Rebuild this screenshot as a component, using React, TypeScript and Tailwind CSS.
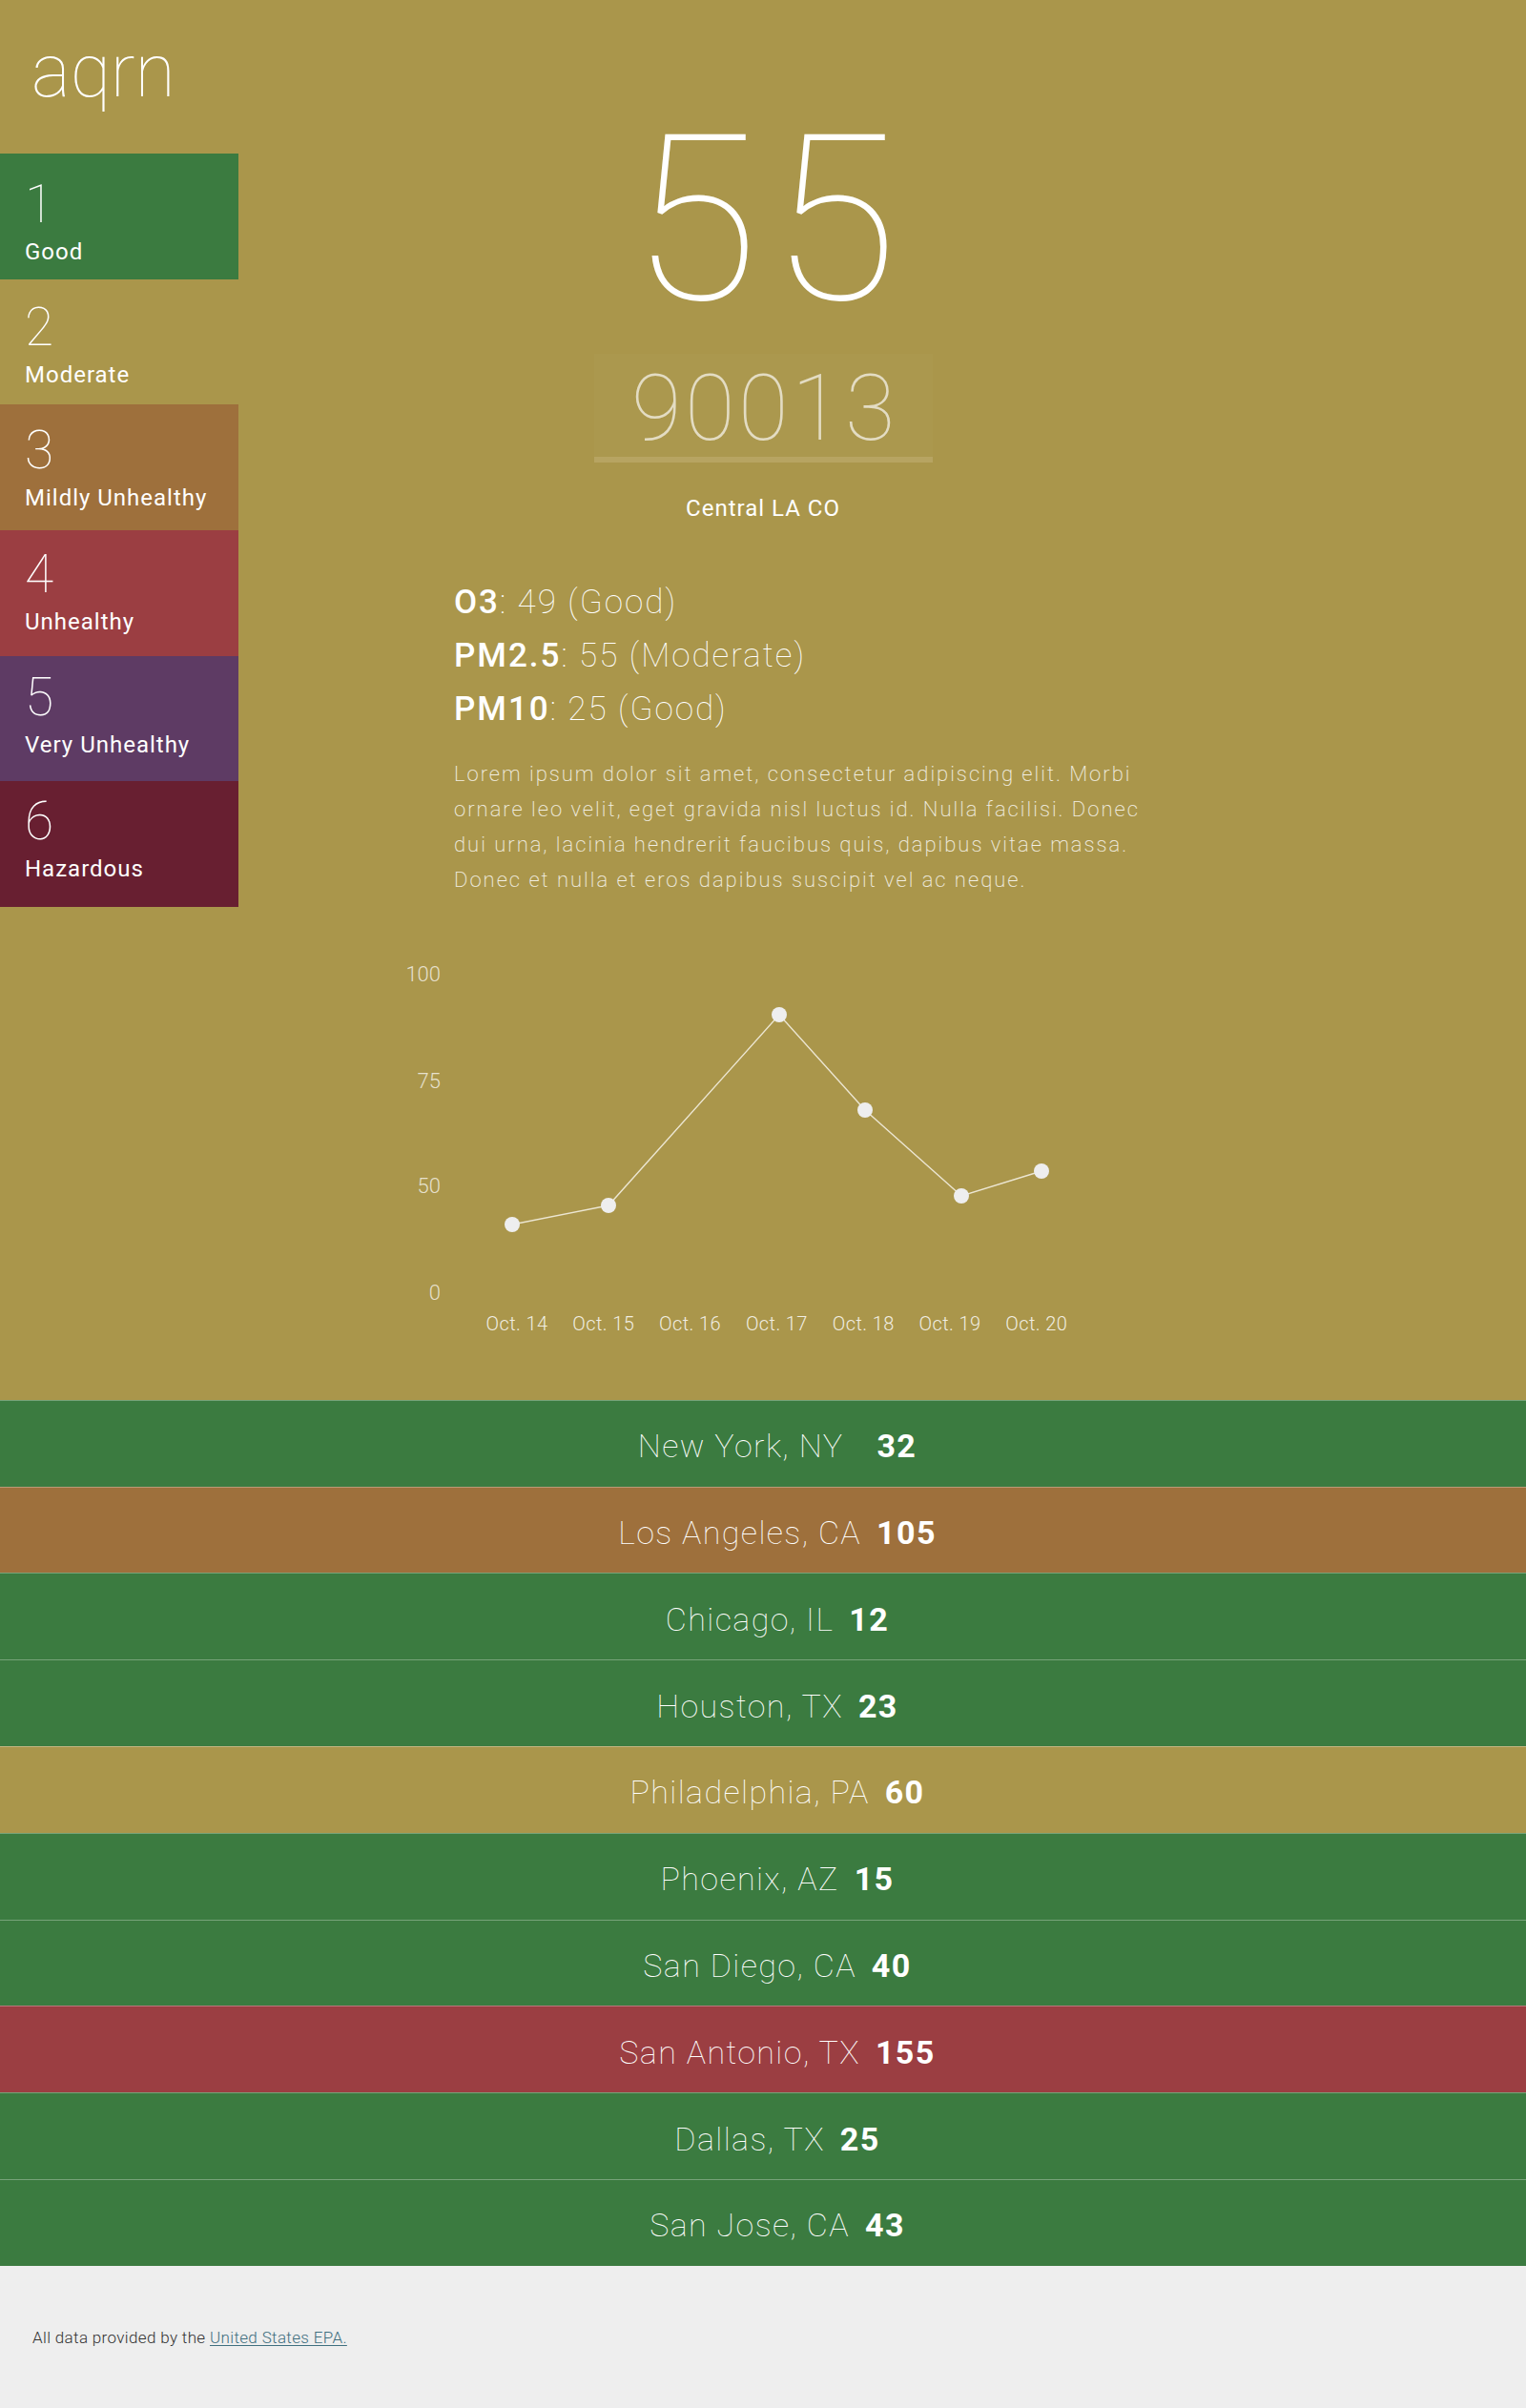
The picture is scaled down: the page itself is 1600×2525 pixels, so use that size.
import React from "react";

const LEVELS = [
  { n: 1, label: "Good", bg: "bg-[#3b7b40]", pt: "pt-[25.5px]" },
  { n: 2, label: "Moderate", bg: "bg-[#aa964b]", pt: "pt-[23.3px]" },
  { n: 3, label: "Mildly Unhealthy", bg: "bg-[#9e703c]", pt: "pt-[21.1px]" },
  { n: 4, label: "Unhealthy", bg: "bg-[#9b3e42]", pt: "pt-[18.9px]" },
  { n: 5, label: "Very Unhealthy", bg: "bg-[#5e3b64]", pt: "pt-[16.7px]" },
  { n: 6, label: "Hazardous", bg: "bg-[#681f31]", pt: "pt-[14.5px]" },
];

const CITIES = [
  { name: "New York, NY\u00a0\u00a0", aqi: 32 },
  { name: "Los Angeles, CA", aqi: 105 },
  { name: "Chicago, IL", aqi: 12 },
  { name: "Houston, TX", aqi: 23 },
  { name: "Philadelphia, PA", aqi: 60 },
  { name: "Phoenix, AZ", aqi: 15 },
  { name: "San Diego, CA", aqi: 40 },
  { name: "San Antonio, TX", aqi: 155 },
  { name: "Dallas, TX", aqi: 25 },
  { name: "San Jose, CA", aqi: 43 },
];

// aqi -> row colour
function rowBg(aqi: number) {
  if (aqi <= 50) return "bg-[#3b7b40]";
  if (aqi <= 100) return "bg-[#aa964b]";
  if (aqi <= 150) return "bg-[#9e703c]";
  return "bg-[#9b3e42]";
}

const POINTS: [number, number][] = [
  [137, 294],
  [238, 274],
  [417, 74],
  [507, 174],
  [608, 264],
  [692, 238],
];

const Y_TICKS = [
  { v: "100", y: 33 },
  { v: "75", y: 145 },
  { v: "50", y: 255 },
  { v: "0", y: 367 },
];

const X_TICKS = ["Oct. 14", "Oct. 15", "Oct. 16", "Oct. 17", "Oct. 18", "Oct. 19", "Oct. 20"];

function Chart() {
  return (
    <svg width="760" height="420" viewBox="0 0 760 420" className="block">
      {Y_TICKS.map((t) => (
        <text
          key={t.v}
          x="62"
          y={t.y}
          textAnchor="end"
          dominantBaseline="middle"
          fontSize="22"
          fontWeight="300"
          fill="rgba(255,255,255,0.72)"
        >
          {t.v}
        </text>
      ))}
      {X_TICKS.map((t, i) => (
        <text
          key={t}
          x={142 + i * 90.8}
          y="400"
          textAnchor="middle"
          dominantBaseline="middle"
          fontSize="20"
          fontWeight="300"
          letterSpacing="0.4"
          fill="rgba(255,255,255,0.85)"
        >
          {t}
        </text>
      ))}
      <polyline
        points={POINTS.map((p) => p.join(",")).join(" ")}
        fill="none"
        stroke="#ece6d2"
        strokeWidth="1.4"
      />
      {POINTS.map(([x, y]) => (
        <circle key={x} cx={x} cy={y} r="8" fill="#eeeeee" />
      ))}
    </svg>
  );
}

export default function App() {
  return (
    <div className="font-['Roboto','Liberation_Sans',sans-serif] text-white">
      <div className="grid grid-cols-[250px_1fr_250px] bg-[#aa964b]">
        <div>
          <h1 className="h-[161px] pt-[37px] pl-[33px] text-[77px] leading-none font-thin">aqrn</h1>
          <ul>
            {LEVELS.map((l) => (
              <li key={l.n} className={`h-[131.7px] pl-[26px] ${l.pt} ${l.bg}`}>
                <div className="text-[55px] leading-none font-thin">{l.n}</div>
                <div className="mt-[8px] text-[24px] leading-[1.2] tracking-[1px]">{l.label}</div>
              </li>
            ))}
          </ul>
        </div>

        <main className="flex flex-col items-center pb-[58px]">
          <div className="mt-[110px] pl-[16px] text-[243px] leading-none font-thin tracking-[13px]">55</div>
          <input
            defaultValue="90013"
            className="mt-[18px] h-[114px] w-[355px] border-b-[6px] border-[#b7a462] bg-white/[0.02] pt-[6px] pl-[4px] text-center text-[96px] font-thin tracking-[3.5px] text-[#e3dcc3] outline-none"
          />
          <p className="mt-[34px] text-[24px] leading-[1.2] tracking-[1px]">Central LA CO</p>

          <div className="mt-[56px] ml-[226px] w-[724px] self-start">
            <ul className="text-[35px] leading-[56px] font-thin tracking-[2px]">
              <li>
                <b className="font-medium">O3</b>: 49 (Good)
              </li>
              <li>
                <b className="font-medium">PM2.5</b>: 55 (Moderate)
              </li>
              <li>
                <b className="font-medium">PM10</b>: 25 (Good)
              </li>
            </ul>
            <p className="mt-[21px] w-[724px] text-[22px] leading-[37px] font-extralight tracking-[2px] text-white/85">
              Lorem ipsum dolor sit amet, consectetur adipiscing elit. Morbi ornare leo velit, eget gravida nisl
              luctus id. Nulla facilisi. Donec dui urna, lacinia hendrerit faucibus quis, dapibus vitae massa.
              Donec et nulla et eros dapibus suscipit vel ac neque.
            </p>
          </div>

          <div className="mt-[49px] ml-[150px] self-start">
            <Chart />
          </div>
        </main>
        <div />
      </div>

      <ul>
        {CITIES.map((c) => (
          <li
            key={c.name}
            className={`flex h-[90.8px] items-center justify-center border-t border-white/30 pt-[6px] pl-[30px] text-[34px] tracking-[1.4px] ${rowBg(c.aqi)}`}
          >
            <span className="font-thin">{c.name}</span>
            <b className="ml-[16px] font-bold">{c.aqi}</b>
          </li>
        ))}
      </ul>

      <footer className="h-[149px] bg-[#eeeeee] pl-[34px] pt-[63px] text-[17px] font-light tracking-[0.35px] text-[#333333]">
        All data provided by the{" "}
        <a href="#" className="text-[#3f6f7f] underline decoration-1 underline-offset-2">
          United States EPA.
        </a>
      </footer>
    </div>
  );
}
